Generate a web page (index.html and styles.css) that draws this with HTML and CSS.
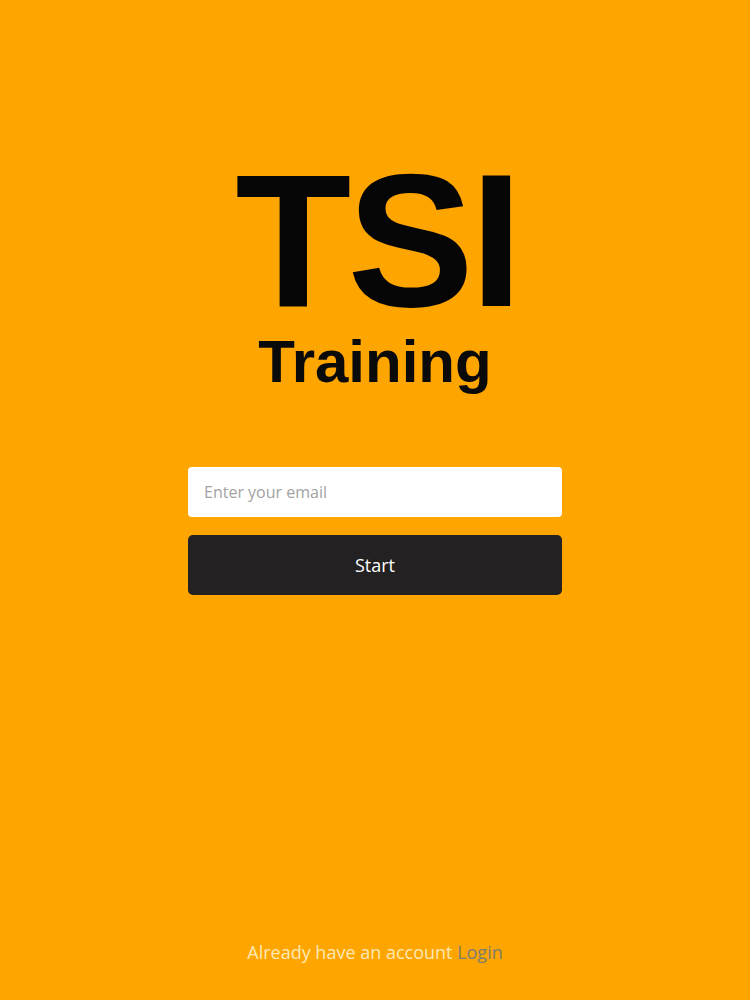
FILE: index.html
```html
<!DOCTYPE html>
<html lang="en">
<head>
<meta charset="utf-8">
<title>TSI Training</title>
<link rel="stylesheet" href="styles.css">
</head>
<body>
<main class="page">
  <header class="brand">
    <h1 class="brand-title">TSI</h1>
    <p class="brand-sub">Training</p>
  </header>
  <form class="signup">
    <input class="email" type="email" placeholder="Enter your email">
    <button class="start" type="button">Start</button>
  </form>
  <footer class="footer">Already have an account <a class="login" href="#">Login</a></footer>
</main>
</body>
</html>
```
FILE: styles.css
```css
* { box-sizing: border-box; }
html, body { margin: 0; padding: 0; }
body {
  background: #ffa500;
  font-family: "Open Sans", "Liberation Sans", sans-serif;
}
.page {
  min-height: 1000px;
  display: flex;
  flex-direction: column;
  align-items: center;
  padding-top: 169px;
  padding-bottom: 36px;
}
.brand {
  display: flex;
  flex-direction: column;
  align-items: center;
}
.brand-title {
  margin: 0;
  font-family: "Liberation Sans", Arial, sans-serif;
  font-weight: 700;
  font-size: 190px;
  line-height: 0.75;
  color: #050505;
  letter-spacing: -4px;
  padding-left: 4px;
}
.brand-sub {
  margin: 20px 0 0;
  font-family: "Liberation Sans", Arial, sans-serif;
  font-weight: 700;
  font-size: 60px;
  line-height: 1;
  color: #0a0a0a;
}
.signup {
  margin-top: 75px;
  width: 374px;
  display: flex;
  flex-direction: column;
  gap: 18px;
}
.email {
  height: 50px;
  border: none;
  border-radius: 4px;
  background: #fff;
  padding: 0 16px;
  font-family: "Open Sans", sans-serif;
  font-size: 16px;
  color: #333;
  outline: none;
}
.email::placeholder { color: #a3a3a3; }
.start {
  height: 60px;
  border: none;
  border-radius: 5px;
  background: #232122;
  color: #fff;
  font-family: "Open Sans", sans-serif;
  font-size: 18px;
}
.footer {
  margin-top: auto;
  font-size: 18px;
  line-height: 24px;
  color: #fde9b4;
}
.login {
  color: #7b7d70;
  text-decoration: none;
}
```
